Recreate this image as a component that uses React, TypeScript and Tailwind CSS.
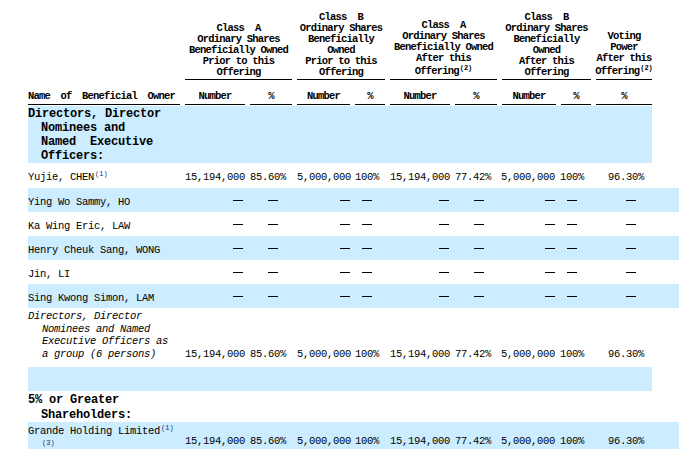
import React from "react";

const COLS =
  "grid grid-cols-[152px_60px_42px_53px_30px_60px_42px_54px_30px_56px] gap-x-[5px]";

const HEAD =
  "flex flex-col justify-end items-center text-center border-b border-black pb-[1px] text-[10.5px] font-bold leading-[11px] tracking-[-0.8px] whitespace-pre";

const SUB =
  "pt-[11px] pb-[2px] border-b border-black text-center text-[10.5px] font-bold leading-[11px] tracking-[-0.8px] whitespace-pre";

const NUM_OFF = ["", "", "", "", "", "", "ml-[-1px]", "ml-[-1px]", "pl-[12px]"];
const DASH_OFF = [
  "pl-[48px]",
  "pl-[18px]",
  "pl-[43px]",
  "pl-[7px]",
  "pl-[49px]",
  "pl-[19px]",
  "pl-[43px]",
  "pl-[6px]",
  "pl-[30px]",
];
const VALUES = [
  "15,194,000",
  "85.60%",
  "5,000,000",
  "100%",
  "15,194,000",
  "77.42%",
  "5,000,000",
  "100%",
  "96.30%",
];

const BLUE = "bg-[#ccecff]";
const TXT = "text-[10.5px] tracking-[-0.3px]";

function NumberCells({ pad }: { pad: string }) {
  return (
    <>
      {VALUES.map((v, i) => (
        <div key={i} className={"whitespace-pre " + pad + " " + NUM_OFF[i]}>
          {v}
        </div>
      ))}
    </>
  );
}

function DashCells() {
  return (
    <>
      {DASH_OFF.map((c, i) => (
        <div key={i} className={"flex items-center " + c}>
          <span className="block w-[10px] h-px bg-black" />
        </div>
      ))}
    </>
  );
}

function DashRow({ name, blue }: { name: string; blue: boolean }) {
  return (
    <div className={COLS + " h-[24px] " + TXT + (blue ? " " + BLUE : "")}>
      <div className="pt-[5px] leading-[18px] whitespace-pre">{name}</div>
      <DashCells />
    </div>
  );
}

export default function App() {
  return (
    <div className="w-[679px] h-[459px] overflow-hidden bg-white text-black font-['Liberation_Mono','DejaVu_Sans_Mono',monospace] pl-[28px]">
      {/* Group headers */}
      <div className={COLS + " pt-[12px]"}>
        <div />
        <div className={HEAD + " col-span-2"}>
          <div>{"Class  A"}</div>
          <div>Ordinary Shares</div>
          <div>Beneficially Owned</div>
          <div>Prior to this</div>
          <div>Offering</div>
        </div>
        <div className={HEAD + " col-span-2"}>
          <div>{"Class  B"}</div>
          <div>Ordinary Shares</div>
          <div>Beneficially</div>
          <div>Owned</div>
          <div>Prior to this</div>
          <div>Offering</div>
        </div>
        <div className={HEAD + " col-span-2"}>
          <div>{"Class  A"}</div>
          <div>Ordinary Shares</div>
          <div>Beneficially Owned</div>
          <div>After this</div>
          <div className="pt-[2px]">
            Offering
            <span className="relative top-[-4px] ml-[1px] text-[7px] tracking-normal">(2)</span>
          </div>
        </div>
        <div className={HEAD + " col-span-2"}>
          <div>{"Class  B"}</div>
          <div>Ordinary Shares</div>
          <div>Beneficially</div>
          <div>Owned</div>
          <div>After this</div>
          <div>Offering</div>
        </div>
        <div className={HEAD}>
          <div>Voting</div>
          <div>Power</div>
          <div>After this</div>
          <div className="pt-[2px]">
            Offering
            <span className="relative top-[-4px] ml-[1px] text-[7px] tracking-normal">(2)</span>
          </div>
        </div>
      </div>

      {/* Sub headers */}
      <div className={COLS}>
        <div className={SUB + " text-left [word-spacing:5px]"}>Name of Beneficial Owner</div>
        <div className={SUB}>Number</div>
        <div className={SUB}>%</div>
        <div className={SUB}>Number</div>
        <div className={SUB}>%</div>
        <div className={SUB}>Number</div>
        <div className={SUB}>%</div>
        <div className={SUB}>Number</div>
        <div className={SUB}>%</div>
        <div className={SUB}>%</div>
      </div>

      {/* Directors section header */}
      <div className={"mt-[1px] h-[57px] w-[624px] " + BLUE}>
        <div className="pt-[1px] text-[12px] font-bold leading-[14px] tracking-[-0.2px] whitespace-pre">
          <div>Directors, Director</div>
          <div className="pl-[13px]">Nominees and</div>
          <div className="pl-[13px]">{"Named  Executive"}</div>
          <div className="pl-[13px]">Officers:</div>
        </div>
      </div>

      {/* Yujie, CHEN */}
      <div className={COLS + " h-[25px] " + TXT}>
        <div className="pt-[5px] leading-[18px] whitespace-pre">
          Yujie, CHEN
          <span className="relative top-[-4px] ml-[1px] text-[7px] tracking-normal text-[#1f2f6b]">(1)</span>
        </div>
        <NumberCells pad="pt-[5px] leading-[18px]" />
      </div>

      <DashRow name="Ying Wo Sammy, HO" blue={true} />
      <DashRow name="Ka Wing Eric, LAW" blue={false} />
      <DashRow name="Henry Cheuk Sang, WONG" blue={true} />
      <DashRow name="Jin, LI" blue={false} />
      <DashRow name="Sing Kwong Simon, LAM" blue={true} />

      {/* Directors as a group */}
      <div className={COLS + " h-[59px] " + TXT}>
        <div className="pt-[2px] leading-[12.5px] italic whitespace-pre">
          <div>Directors, Director</div>
          <div className="pl-[14px]">Nominees and Named</div>
          <div className="pl-[14px]">Executive Officers as</div>
          <div className="pl-[14px]">a group (6 persons)</div>
        </div>
        <NumberCells pad="pt-[40px] leading-[12.5px]" />
      </div>

      {/* Empty blue row */}
      <div className={"h-[24px] w-[624px] " + BLUE} />

      {/* 5% or Greater Shareholders */}
      <div className="h-[31px] pt-[2px] text-[12px] font-bold leading-[14.5px] tracking-[-0.2px] whitespace-pre">
        <div>5% or Greater</div>
        <div className="pl-[13px]">Shareholders:</div>
      </div>

      {/* Grande Holding Limited */}
      <div className={COLS + " h-[27px] " + TXT + " " + BLUE}>
        <div className="pt-[3px] whitespace-pre">
          <div className="leading-[12.5px]">
            Grande Holding Limited
            <span className="relative top-[-4px] ml-[1px] text-[7px] tracking-normal text-[#1f2f6b]">(1)</span>
          </div>
          <div className="pl-[14px] text-[7px] leading-[9px] tracking-normal text-[#1f2f6b]">(3)</div>
        </div>
        <NumberCells pad="pt-[13px] leading-[12.5px]" />
      </div>
    </div>
  );
}
